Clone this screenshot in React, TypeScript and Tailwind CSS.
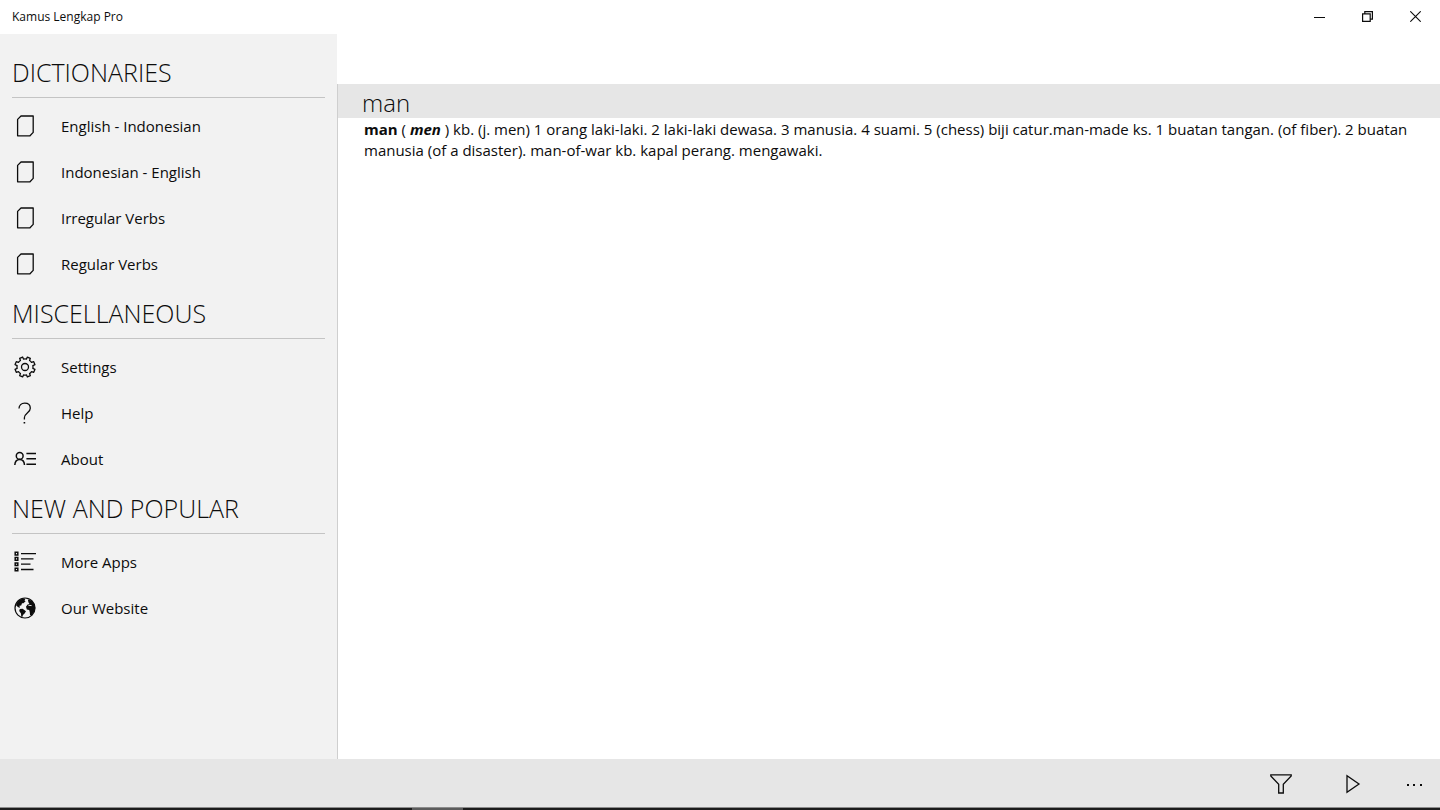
import type { ReactNode } from "react";

interface NavItem {
  label: string;
  icon: ReactNode;
}

interface NavSection {
  title: string;
  items: NavItem[];
}

const iconProps = {
  width: 22,
  height: 22,
  viewBox: "0 0 22 22",
  fill: "none",
  stroke: "currentColor",
  strokeWidth: 1.3,
  "aria-hidden": true,
} as const;

function PageIcon() {
  return (
    <svg {...iconProps}>
      <path d="M7 1H19.2V17.4L16 20.8H3.6V4.4Z" strokeLinejoin="round" />
    </svg>
  );
}

// Eight teeth around a small hub, turned so that a gap points up
function GearIcon() {
  return (
    <svg {...iconProps}>
      <path
        transform="rotate(22.5 11 11)"
        strokeLinejoin="round"
        d="M9.3 3.2L9.4 0.9H12.6L12.7 3.2Q14.2 3.4 15.3 4.3L17 2.7L19.3 5L17.7 6.7Q18.6 7.8 18.8 9.3L21.1 9.4V12.6L18.8 12.7Q18.6 14.2 17.7 15.3L19.3 17L17 19.3L15.3 17.7Q14.2 18.6 12.7 18.8L12.6 21.1H9.4L9.3 18.8Q7.8 18.6 6.7 17.7L5 19.3L2.7 17L4.3 15.3Q3.4 14.2 3.2 12.7L0.9 12.6V9.4L3.2 9.3Q3.4 7.8 4.3 6.7L2.7 5L5 2.7L6.7 4.3Q7.8 3.4 9.3 3.2Z"
      />
      <circle cx="11" cy="11" r="3.5" />
    </svg>
  );
}

function HelpIcon() {
  return (
    <svg {...iconProps}>
      <path d="M5 6.6C5 3.2 7.3 1.2 10.7 1.2S16.3 3.2 16.3 6.2C16.3 11 10.4 11.2 10.4 15.8V17.4" />
      <path d="M10.4 20V21.5" strokeWidth="1.6" />
    </svg>
  );
}

function AboutIcon() {
  return (
    <svg {...iconProps} strokeWidth={1.5}>
      <circle cx="5.7" cy="7.9" r="3.4" />
      <path d="M0.8 17C1 13.6 3 11.4 5.7 11.4S10.3 13.6 10.5 17" />
      <path d="M12.4 5.4H22M12.4 10.7H22M12.4 16.2H22" />
    </svg>
  );
}

function ListIcon() {
  return (
    <svg {...iconProps} strokeWidth={1.5}>
      <path d="M1.2 1.3H3.8V3.9H1.2ZM1.2 6.6H3.8V9.2H1.2ZM1.2 11.9H3.8V14.5H1.2ZM1.2 17.2H3.8V19.8H1.2Z" />
      <path d="M7 2.6H22M7 7.9H19.5M7 13.2H16.5M7 18.5H19.5" strokeWidth="1.3" />
    </svg>
  );
}

function GlobeIcon() {
  return (
    <svg {...iconProps} strokeWidth={1.2}>
      <circle cx="11" cy="11" r="10" />
      <path
        fill="currentColor"
        stroke="none"
        d="M2.2 6.6L5 3.2L8.6 1.6L11.4 1.8L10.5 3.4L11.6 4.2L9.4 6.2L8 6.2L7.2 8.4L5.4 8.8L6 10.8L4.2 10.2L2.2 8.4ZM5.8 12L8.6 11.8L12 14.2L10.6 16.6L9 18L8.2 20.2L7.2 19.6L7 16.6L5.2 14ZM13.8 2.2L17.8 3.8L20.6 7.6L21.2 11L20.2 15L17.6 18.2L16 18L15.8 15.2L15.2 13L12.8 12.4L12 9.8L13.6 7.6L15.4 7L14.4 5.2Z"
      />
      <path d="M14.4 8.3L17.6 8.6" stroke="#f2f2f2" strokeWidth="0.9" />
    </svg>
  );
}

const sections: NavSection[] = [
  {
    title: "DICTIONARIES",
    items: [
      { label: "English - Indonesian", icon: <PageIcon /> },
      { label: "Indonesian - English", icon: <PageIcon /> },
      { label: "Irregular Verbs", icon: <PageIcon /> },
      { label: "Regular Verbs", icon: <PageIcon /> },
    ],
  },
  {
    title: "MISCELLANEOUS",
    items: [
      { label: "Settings", icon: <GearIcon /> },
      { label: "Help", icon: <HelpIcon /> },
      { label: "About", icon: <AboutIcon /> },
    ],
  },
  {
    title: "NEW AND POPULAR",
    items: [
      { label: "More Apps", icon: <ListIcon /> },
      { label: "Our Website", icon: <GlobeIcon /> },
    ],
  },
];

function TitleBar() {
  const button = "flex w-12 items-center justify-center hover:bg-gray-200";

  return (
    <header className="flex h-[34px] shrink-0 items-stretch justify-between pl-3">
      <span className="self-center text-[12px]">Kamus Lengkap Pro</span>
      <div className="flex pr-px pb-px">
        <button type="button" aria-label="Minimize" className={button}>
          <svg width="11" height="11" viewBox="0 0 11 11" stroke="currentColor">
            <path d="M0 6.5H11" />
          </svg>
        </button>
        <button type="button" aria-label="Restore" className={button}>
          <svg width="11" height="11" viewBox="0 0 11 11" fill="none" stroke="currentColor" strokeWidth="1.2">
            <path d="M0.6 2.8H8.2V10.4H0.6ZM2.8 2.8V0.6H10.4V8.2H8.2" />
          </svg>
        </button>
        <button type="button" aria-label="Close" className={button}>
          <svg width="11" height="11" viewBox="0 0 11 11" stroke="currentColor" strokeWidth="1.1">
            <path d="M0.3 0.3L10.7 10.7M10.7 0.3L0.3 10.7" />
          </svg>
        </button>
      </div>
    </header>
  );
}

function Sidebar() {
  return (
    <nav className="w-[337px] shrink-0 bg-[#f2f2f2] px-3 pt-3">
      {sections.map((section) => (
        <section key={section.title}>
          <h2 className="flex h-13 items-center border-b border-[#c4c4c4] pt-0.5 text-[25px] font-light">
            {section.title}
          </h2>
          <ul className="pt-[5px]">
            {section.items.map((item) => (
              <li key={item.label}>
                <a href="#" className="flex h-[46px] items-center gap-[25px] pl-0.5 text-[15px]">
                  {item.icon}
                  {item.label}
                </a>
              </li>
            ))}
          </ul>
        </section>
      ))}
    </nav>
  );
}

function Entry() {
  return (
    <main className="flex-1 pt-[50px]">
      <div className="h-full border-l border-[#cfcfcf]">
        <h1 className="flex h-[34px] items-center bg-[#e6e6e6] px-6 pt-1 text-2xl font-light">man</h1>
        <p className="px-[26px] pt-px text-[15px] leading-[21px]">
          <b>man</b> ( <b className="italic">men</b> ) kb. (j. men) 1 orang laki-laki. 2 laki-laki
          dewasa. 3 manusia. 4 suami. 5 (chess) biji catur.man-made ks. 1 buatan tangan. (of fiber).
          2 buatan manusia (of a disaster). man-of-war kb. kapal perang. mengawaki.
        </p>
      </div>
    </main>
  );
}

function CommandBar() {
  return (
    <footer className="shrink-0">
      <div className="flex h-12 items-center justify-end gap-11 bg-[#e6e6e6] pt-0.5 pr-[18px]">
        <button type="button" aria-label="Filter" className="mr-1">
          <svg width="22" height="22" viewBox="0 0 22 22" fill="none" stroke="currentColor" strokeWidth="1.3">
            <path d="M0.8 1.8H21.2V3L13.3 11.2V20H8.7V11.2L0.8 3Z" />
          </svg>
        </button>
        <button type="button" aria-label="Play">
          <svg width="22" height="22" viewBox="0 0 22 22" fill="none" stroke="currentColor" strokeWidth="1.3">
            <path d="M7 2.7V19.3L19 11Z" />
          </svg>
        </button>
        <button type="button" aria-label="More">
          <svg width="16" height="22" viewBox="0 0 16 22" fill="currentColor">
            <path d="M1 11h2v2h-2zM7 11h2v2h-2zM14 11h2v2h-2z" />
          </svg>
        </button>
      </div>
      <div className="flex h-[3px] border-t border-[#8c8c8c] bg-[#1c1c1c]">
        <div className="ml-[412px] w-[51px] bg-[#5c5c5c]" />
      </div>
    </footer>
  );
}

export default function App() {
  return (
    <div className="flex min-h-screen flex-col bg-white font-['Open_Sans','Noto_Sans',sans-serif] text-[#0c0c0c]">
      <TitleBar />
      <div className="flex flex-1">
        <Sidebar />
        <Entry />
      </div>
      <CommandBar />
    </div>
  );
}
